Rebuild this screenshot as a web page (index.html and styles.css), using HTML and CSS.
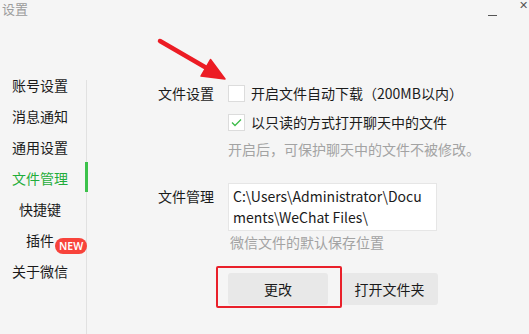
FILE: index.html
```html
<!DOCTYPE html>
<html lang="zh-CN">
<head>
<meta charset="utf-8">
<link rel="stylesheet" href="styles.css">
</head>
<body>
<div class="window">
  <header class="titlebar">
    <span class="title">设置</span>
    <div class="controls">
      <span class="min"></span>
      <span class="close">✕</span>
    </div>
  </header>
  <div class="layout">
    <nav class="sidebar">
      <div class="item">账号设置</div>
      <div class="item">消息通知</div>
      <div class="item">通用设置</div>
      <div class="item active">文件管理</div>
      <div class="item">快捷键</div>
      <div class="item"><span class="plug">插件<span class="badge">NEW</span></span></div>
      <div class="item">关于微信</div>
    </nav>
    <main class="main">
      <section class="group">
        <div class="label">文件设置</div>
        <div class="body">
          <label class="check-row"><span class="box"></span><span>开启文件自动下载（200MB以内）</span></label>
          <label class="check-row second"><span class="box checked"><svg width="11" height="9" viewBox="0 0 11 9"><path d="M1 4.5L4 7.5L10 1.5" fill="none" stroke="#3dbb4a" stroke-width="1.3"/></svg></span><span>以只读的方式打开聊天中的文件</span></label>
          <div class="hint">开启后，可保护聊天中的文件不被修改。</div>
        </div>
      </section>
      <section class="group files">
        <div class="label pad">文件管理</div>
        <div class="body">
          <div class="path">C:\Users\Administrator\Documents\WeChat Files\</div>
          <div class="hint hint2">微信文件的默认保存位置</div>
          <div class="buttons">
            <button class="btn change">更改</button>
            <button class="btn open">打开文件夹</button>
          </div>
        </div>
      </section>
    </main>
  </div>
  <div class="highlight"></div>
  <svg class="arrow" width="529" height="334" viewBox="0 0 529 334">
    <path d="M160 41L210 70" stroke="#ec1c24" stroke-width="4.5" stroke-linecap="round"/>
    <path d="M225 79L210.5 59.5L201 76Z" fill="#ec1c24" stroke="#ec1c24" stroke-width="1.5" stroke-linejoin="round"/>
  </svg>
</div>
</body>
</html>
```
FILE: styles.css
```css
* { box-sizing: border-box; }
html, body { margin: 0; padding: 0; }
body {
  background: #f5f5f5;
  font-family: "Noto Sans CJK SC", "Noto Sans", sans-serif;
  font-size: 14px;
  color: #1b1b1b;
}
.window {
  position: relative;
  width: 529px;
  height: 334px;
  overflow: hidden;
}
.titlebar {
  height: 20px;
  display: flex;
  justify-content: space-between;
  align-items: flex-start;
}
.title {
  font-size: 13px;
  line-height: 20px;
  color: #9c9c9c;
  padding-left: 2px;
  margin-top: -1px;
}
.controls {
  display: flex;
  align-items: flex-start;
  gap: 22px;
  flex: none;
}
.min {
  display: block;
  width: 9px;
  height: 1px;
  background: #555;
  margin-top: 15px;
}
.close {
  display: block;
  width: 10px;
  font-family: "DejaVu Sans", sans-serif;
  font-size: 11px;
  line-height: 12px;
  color: #555;
  overflow: visible;
}
.layout {
  display: flex;
  align-items: flex-start;
}
.sidebar {
  width: 86px;
  padding-top: 50px;
  flex: none;
}
.item {
  position: relative;
  width: 86px;
  height: 31px;
  line-height: 31px;
  padding-right: 6px;
  text-align: center;
  color: #1b1b1b;
}
.item.active { color: #1fad3a; }
.item.active::after {
  content: "";
  position: absolute;
  right: -2px;
  top: -1px;
  width: 3px;
  height: 30px;
  background: #3cc24b;
}
.plug { position: relative; }
.badge {
  position: absolute;
  left: 29px;
  top: 8px;
  height: 16px;
  line-height: 16px;
  padding: 0 4px;
  border-radius: 8px;
  background: #f8433b;
  color: #fff;
  font-family: "Noto Sans", sans-serif;
  font-size: 10.5px;
  font-weight: 600;
}
.main {
  flex: 1;
  margin-top: 60px;
  height: 254px;
  border-left: 1px solid #e1e1e1;
  padding: 3px 0 0 71px;
}
.group {
  display: flex;
}
.label {
  width: 70px;
  flex: none;
  line-height: 20px;
}
.label.pad { padding-top: 3px; }
.body { display: flex; flex-direction: column; align-items: flex-start; }
.check-row {
  display: flex;
  align-items: center;
  height: 20px;
  gap: 6px;
}
.check-row.second { margin-top: 9px; }
.box {
  width: 17px;
  height: 17px;
  background: #fff;
  border: 1px solid #dcdcdc;
  display: flex;
  align-items: center;
  justify-content: center;
}
.hint {
  margin-top: 7px;
  line-height: 20px;
  color: #a3a3a3;
}
.files { margin-top: 24px; }
.path {
  width: 209px;
  height: 48px;
  background: #fff;
  border: 1px solid #e6e6e6;
  padding: 2px 4px;
  line-height: 21px;
  word-break: break-all;
  color: #1b1b1b;
}
.hint2 { margin-top: 1px; padding-left: 2px; }
.buttons {
  display: flex;
  gap: 13px;
  margin-top: 21px;
}
.btn {
  height: 32px;
  border: none;
  border-radius: 3px;
  background: #e8e8e8;
  font-family: inherit;
  font-size: 14px;
  color: #1b1b1b;
  padding: 0;
}
.change { width: 100px; }
.open { width: 97px; }
.highlight {
  position: absolute;
  left: 216px;
  top: 266px;
  width: 126px;
  height: 42px;
  border: 2px solid #e9202a;
  border-radius: 2px;
}
.arrow {
  position: absolute;
  left: 0;
  top: 0;
  pointer-events: none;
}
```
